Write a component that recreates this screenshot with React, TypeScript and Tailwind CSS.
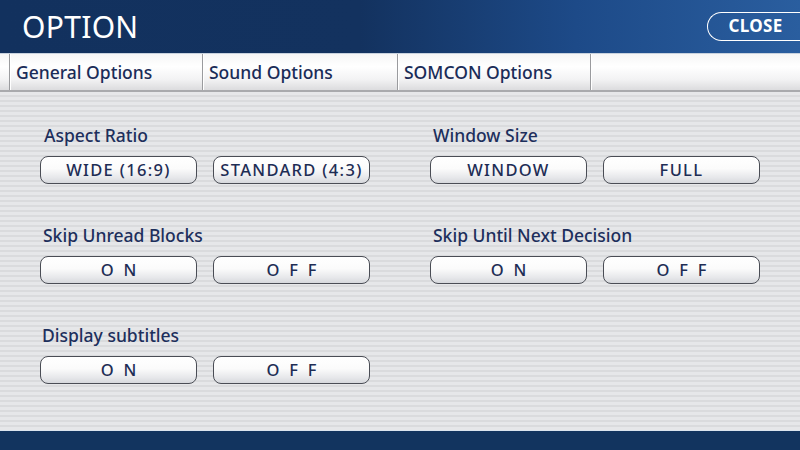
import React from "react";

const font = "font-['Noto_Sans','Open_Sans',sans-serif]";

function OptButton({ label, wide = false }: { label: string; wide?: boolean }) {
  return (
    <button
      className={
        "h-[28px] w-[157px] rounded-[8px] border-[1.5px] border-[#4a4d55] bg-[linear-gradient(to_bottom,#ffffff_0%,#fbfbfb_45%,#e6e7ea_80%,#d6d8dc_100%)] text-[16.5px] font-medium text-[#1e2d55] shadow-[inset_0_1px_0_#ffffff] " +
        (wide ? "tracking-[0.08em]" : "pl-[0.6em] tracking-[0.6em]")
      }
    >
      {label}
    </button>
  );
}

function OptionGroup({ title, left, right, wide = false, titleShift = "" }: { title: string; left: string; right: string; wide?: boolean; titleShift?: string }) {
  return (
    <div className="flex flex-col">
      <div className={"h-[22px] text-[17.5px] font-medium leading-[22px] text-[#1d2f5c] " + titleShift}>{title}</div>
      <div className="mt-[10px] flex gap-[16px]">
        <OptButton label={left} wide={wide} />
        <OptButton label={right} wide={wide} />
      </div>
    </div>
  );
}

function Tab({ label, w }: { label: string; w: string }) {
  return (
    <div className={"flex h-full items-center border-r border-[#9a9b9e] pl-[6px] text-[17.5px] font-medium text-[#1a2c58] shadow-[1px_0_0_#ffffff] " + w}>
      {label}
    </div>
  );
}

export default function App() {
  return (
    <div className={"flex h-[450px] w-[800px] flex-col overflow-hidden " + font}>
      <div className="flex h-[53px] shrink-0 items-center justify-between bg-[linear-gradient(to_right,#12315e_0%,#13325f_45%,#1d4a88_72%,#2a5e9f_100%)] pl-[22px]">
        <div className="text-[30px] leading-none tracking-[0.01em] text-white">OPTION</div>
        <div className="mb-[1px] flex h-[29px] w-[93px] items-center justify-center self-center rounded-l-full border-[1.5px] border-r-0 border-white pl-[3px] text-[17px] font-bold tracking-[0.02em] text-white">
          CLOSE
        </div>
      </div>
      <div className="h-[1px] shrink-0 bg-[#c8d2de]" />
      <div className="flex h-[36px] shrink-0 bg-[linear-gradient(to_bottom,#f6f6f6_0%,#ffffff_35%,#f3f3f4_70%,#dcdcde_100%)]">
        <div className="h-full w-[10px] border-r border-[#9a9b9e] shadow-[1px_0_0_#ffffff]" />
        <Tab label="General Options" w="w-[193px]" />
        <Tab label="Sound Options" w="w-[195px]" />
        <Tab label="SOMCON Options" w="w-[193px]" />
        <div className="flex-1" />
      </div>
      <div className="h-[2px] shrink-0 bg-[#a9aaad]" />
      <div className="flex flex-1 flex-col gap-[40px] bg-[repeating-linear-gradient(to_bottom,#e6e7e9_0px,#e6e7e9_3px,#dadbdd_3px,#dadbdd_5px)] pl-[40px] pt-[32px]">
        <div className="flex gap-[60px]">
          <OptionGroup title="Aspect Ratio" left="WIDE (16:9)" right="STANDARD (4:3)" wide titleShift="pl-[4px]" />
          <OptionGroup title="Window Size" left="WINDOW" right="FULL" wide titleShift="pl-[3px]" />
        </div>
        <div className="flex gap-[60px]">
          <OptionGroup title="Skip Unread Blocks" left="ON" right="OFF" titleShift="pl-[3px]" />
          <OptionGroup title="Skip Until Next Decision" left="ON" right="OFF" titleShift="pl-[3px]" />
        </div>
        <div className="flex gap-[60px]">
          <OptionGroup title="Display subtitles" left="ON" right="OFF" titleShift="pl-[2px]" />
        </div>
      </div>
      <div className="h-[1px] shrink-0 bg-[#dbe4ee]" />
      <div className="h-[19px] shrink-0 bg-[#12345f]" />
    </div>
  );
}
